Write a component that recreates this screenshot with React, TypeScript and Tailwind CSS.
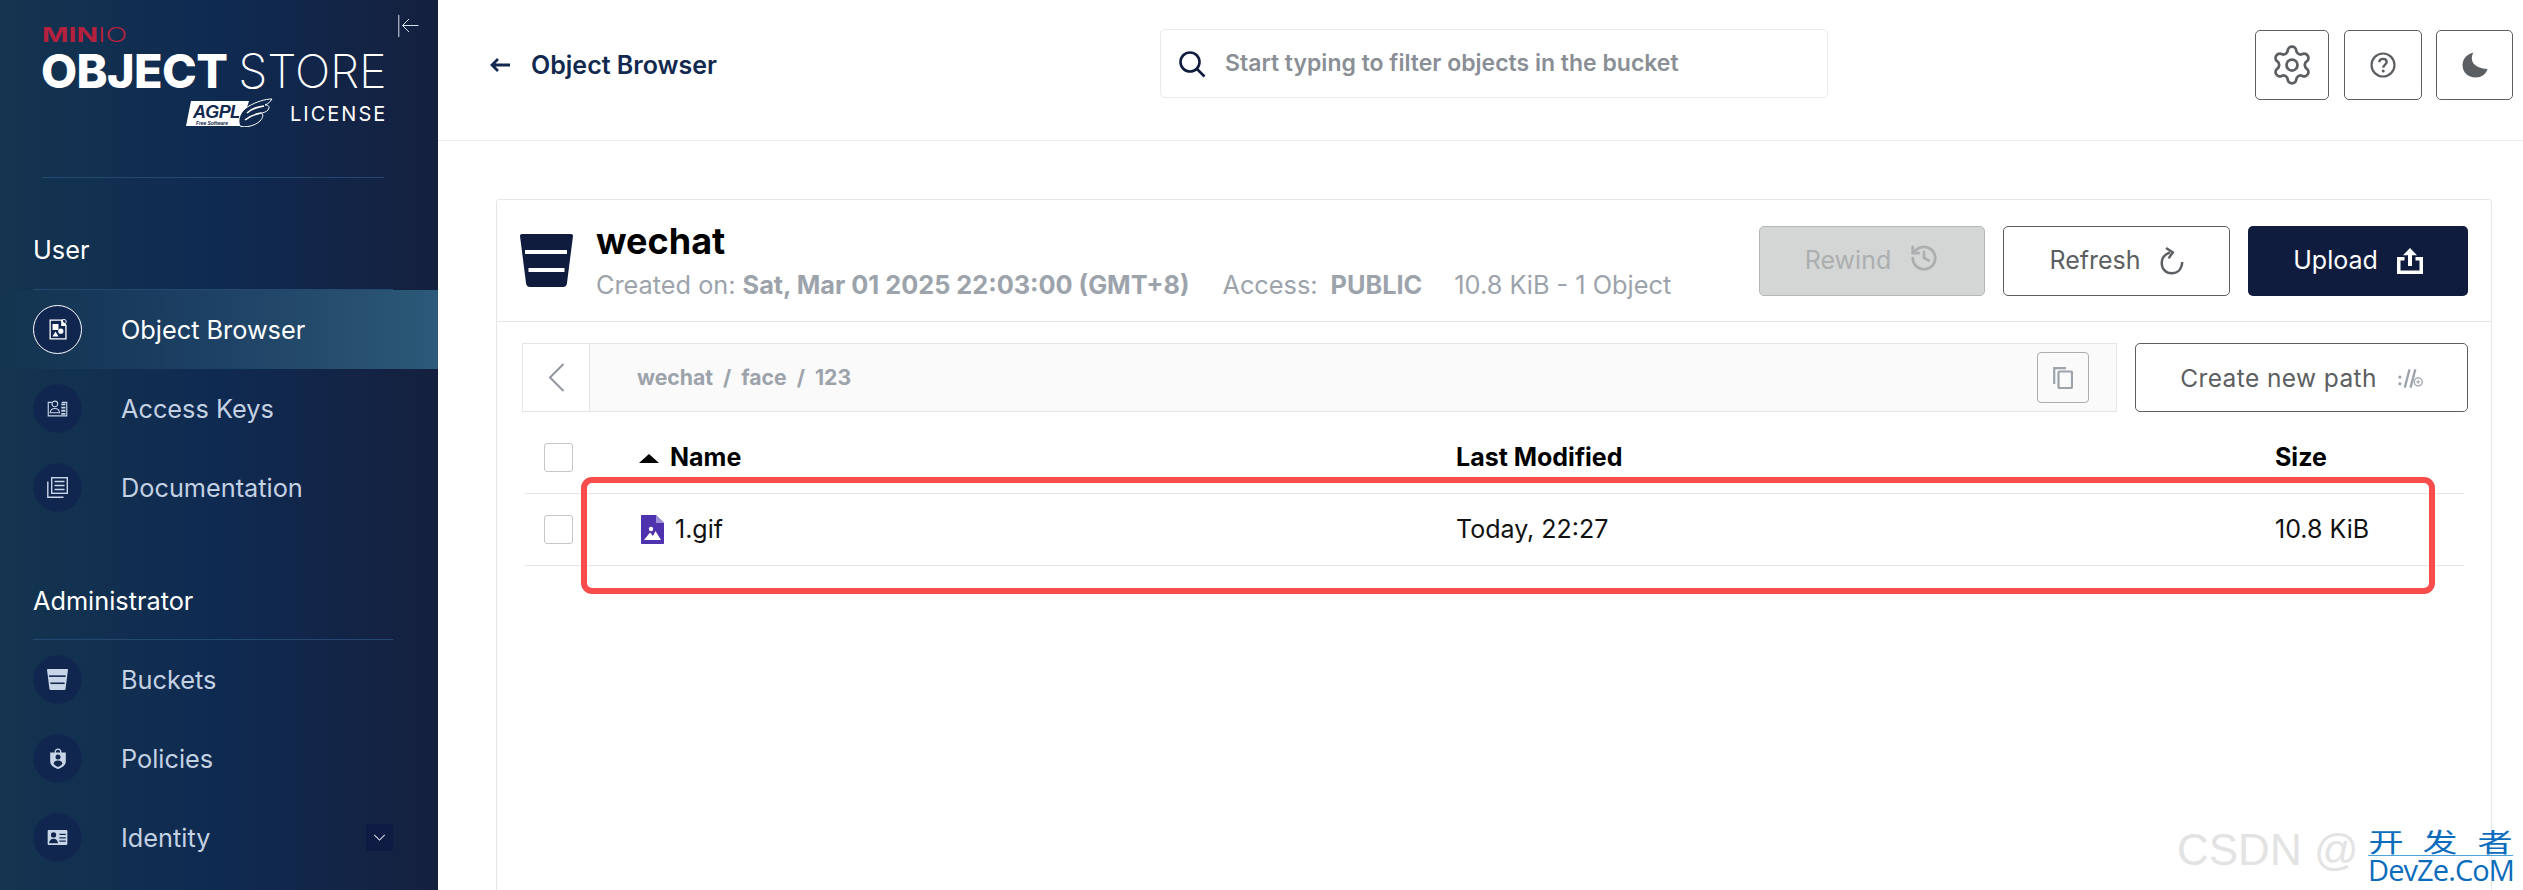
import { History, Settings } from "lucide-react";
import type { ReactNode } from "react";

const NAVY = "#0f1c3d";

function ObjectBrowserIcon() {
  return (
    <svg viewBox="0 0 20 21" className="w-[20px] h-[21px]" fill="#fff">
      <path fillRule="evenodd" d="M1.5 0.5H12.5L15 0.5V2.6L18.6 6V20.5H1.5ZM2.8 1.8V19.2H17.3V7H13.2V1.8Z" />
      <circle cx="16" cy="2.6" r="2.2" fill="none" stroke="#fff" strokeWidth="0.9" />
      <rect x="4.5" y="5" width="6" height="6" />
      <circle cx="12.8" cy="12.2" r="2.6" />
      <path d="M7.5 12.6L10.5 17.6H4.5Z" />
    </svg>
  );
}

function AccessKeysIcon() {
  return (
    <svg viewBox="0 0 22 18" className="w-[21px] h-[17px]" fill="none" stroke="#c8d5e6" strokeWidth="1.2">
      <path d="M5 2.5H1.2V16.8H20.8V2.5H15.5" />
      <circle cx="8.2" cy="4.2" r="3" />
      <path d="M3.2 13.5C3.5 10.5 5.5 9 8.2 9C11 9 12.9 10.5 13.2 13.5Z" />
      <path d="M15 4.6H19.4M15 8H19.4M15 11.4H19.4M15 14.6H19.4" strokeWidth="1.9" />
    </svg>
  );
}

function DocumentationIcon() {
  return (
    <svg viewBox="0 0 21 21" className="w-[21px] h-[21px]" fill="none" stroke="#c8d5e6" strokeWidth="1.4">
      <rect x="4.7" y="0.7" width="15.6" height="15.6" />
      <path d="M7.5 4.5H17.5M7.5 8.5H17.5M7.5 12.5H17.5" strokeWidth="1.6" />
      <path d="M0.8 4.5V20.2H16.5" />
    </svg>
  );
}

function BucketIcon({ color, gap }: { color: string; gap: string }) {
  return (
    <svg viewBox="0 0 53 53" className="w-full h-full">
      <path
        d="M2 0H51C52.3 0 53 .8 53 2L47 49C46.7 51.6 45.4 53 43 53H10C7.6 53 6.3 51.6 6 49L0 2C0 .8.7 0 2 0Z"
        fill={color}
      />
      <rect x="5" y="16" width="42" height="4" fill={gap} />
      <rect x="8.5" y="34" width="36" height="4" fill={gap} />
    </svg>
  );
}

function PoliciesIcon() {
  return (
    <svg viewBox="0 0 16 21" className="w-[16px] h-[21px]" fill="#c8d5e6">
      <path fillRule="evenodd" d="M4.5 4.5C4.5 2 6 .5 8 .5S11.5 2 11.5 4.5H15.8V13.5C15.8 17 12.5 19.5 8 21C3.5 19.5 .2 17 .2 13.5V4.5ZM5.8 4.5H10.2C10.2 2.8 9.3 1.8 8 1.8S5.8 2.8 5.8 4.5Z" />
      <circle cx="8" cy="9" r="2.5" fill="#12294f" />
      <path d="M3.6 16C3.8 13.6 5.6 12.6 8 12.6S12.2 13.6 12.4 16C11 17.6 9.5 18.4 8 18.9C6.5 18.4 5 17.6 3.6 16Z" fill="#12294f" />
    </svg>
  );
}

function IdentityIcon() {
  return (
    <svg viewBox="0 0 21 16" className="w-[21px] h-[15px]" fill="#c8d5e6">
      <path fillRule="evenodd" d="M1 0H20C20.6 0 21 .4 21 1V15C21 15.6 20.6 16 20 16H1C.4 16 0 15.6 0 15V1C0 .4.4 0 1 0ZM6.3 2.5A2.8 2.8 0 1 0 6.3 8.1A2.8 2.8 0 1 0 6.3 2.5ZM1.6 14H11C10.8 11 9 9.3 6.3 9.3S1.8 11 1.6 14ZM12.5 4V5.4H19.3V4ZM12.5 7.6V9H19.3V7.6ZM12.5 11.2V12.6H19.3V11.2Z" />
    </svg>
  );
}

function NavItem({ icon, label, active, chevron }: { icon: ReactNode; label: string; active?: boolean; chevron?: boolean }) {
  return (
    <div
      className={`flex items-center h-[79px] pl-[33px] ${
        active ? "bg-[linear-gradient(90deg,rgba(43,90,120,0)_0%,#2c5a7a_100%)] text-white" : "text-[#c3d1e3]"
      }`}
    >
      <div
        className={`flex items-center justify-center w-[49px] h-[49px] rounded-full bg-[#11264f] ${
          active ? "border border-white" : "border border-[#13294f]"
        }`}
      >
        {icon}
      </div>
      <span className="ml-[39px] pt-[1px] text-[25.3px] leading-none">{label}</span>
      {chevron && (
        <div className="ml-auto mr-[45px] flex items-center justify-center w-[27px] h-[27px] rounded-[3px] bg-[#0e1b42]">
          <svg viewBox="0 0 14 8" className="w-[13px] h-[7px]" fill="none" stroke="#d5deea" strokeWidth="1.2">
            <path d="M1 1L7 7L13 1" />
          </svg>
        </div>
      )}
    </div>
  );
}

function Logo() {
  return (
    <div className="h-[177px] pl-[42px] pt-[26px] text-white">
      <div className="h-[18px] flex items-center origin-left scale-x-[1.42] text-[#b3213f] text-[20px] leading-none">
        <span className="font-bold">MIN</span>
        <span className="font-light">IO</span>
      </div>
      <div className="mt-[9px] h-[36px] flex items-center text-[46.8px] leading-none whitespace-nowrap -ml-[1px]">
        <span className="font-extrabold tracking-[-0.6px]">OBJECT</span>
        <span className="ml-[11px] font-extralight tracking-[-0.2px]">STORE</span>
      </div>
      <div className="mt-[9px] flex items-center pl-[143px]">
        <svg viewBox="0 0 88 29" className="w-[88px] h-[29px]">
          <path d="M1 28L6 3H64L56 28Z" fill="#fff" />
          <text x="8" y="20" fontFamily="Liberation Sans, sans-serif" fontSize="18" fontStyle="italic" fontWeight="700" fill="#12294f" textLength="48">
            AGPL
          </text>
          <text x="11" y="26.5" fontFamily="Liberation Sans, sans-serif" fontSize="5" fontStyle="italic" fontWeight="700" fill="#12294f" textLength="32">
            Free Software
          </text>
          <path d="M55 28C52 22 55 13 64 8C71 4 80 1 87 1C85 4 83 6 80 7C84 7 85 9 83 12C81 14 78 15 76 15C79 16 78 20 75 23C70 28 60 30 55 28Z" fill="#12294f" stroke="#fff" strokeWidth="1" />
          <path d="M62 15C67 10 73 9 79 8M60 22C66 17 71 16 76 15" fill="none" stroke="#fff" strokeWidth="1.6" />
        </svg>
        <span className="ml-[17px] pt-[2px] text-[20px] leading-none tracking-[2px]">LICENSE</span>
      </div>
    </div>
  );
}

function Sidebar() {
  return (
    <aside className="relative shrink-0 w-[438px] h-full bg-[linear-gradient(90deg,#14344f_0%,#0f2a51_50%,#15203e_100%)]">
      <svg viewBox="0 0 21 22" className="absolute left-[398px] top-[15px] w-[21px] h-[22px]" fill="none" stroke="#d8e0ea" strokeWidth="1">
        <path d="M.8 0V22M20.5 10.5H5M11 4L4.5 10.5L11 17" />
      </svg>
      <Logo />
      <div className="ml-[42px] w-[342px] h-px bg-[#24496e]" />
      <div className="ml-[33px] mt-[56px] h-[32px] flex items-center text-white text-[25.3px] leading-none">User</div>
      <div className="ml-[33px] mt-[23px] w-[360px] h-px bg-[#24496e]" />
      <NavItem active icon={<ObjectBrowserIcon />} label="Object Browser" />
      <NavItem icon={<AccessKeysIcon />} label="Access Keys" />
      <NavItem icon={<DocumentationIcon />} label="Documentation" />
      <div className="ml-[33px] mt-[58px] h-[32px] flex items-center text-white text-[25.3px] leading-none">Administrator</div>
      <div className="ml-[33px] mt-[22px] w-[360px] h-px bg-[#24496e]" />
      <NavItem
        icon={
          <div className="w-[21px] h-[21px]">
            <BucketIcon color="#c8d5e6" gap="#12294f" />
          </div>
        }
        label="Buckets"
      />
      <NavItem icon={<PoliciesIcon />} label="Policies" />
      <NavItem chevron icon={<IdentityIcon />} label="Identity" />
    </aside>
  );
}

function TopIconButton({ width, children }: { width: string; children: ReactNode }) {
  return <button className={`flex items-center justify-center h-[70px] rounded-[5px] border border-[#5c5f62] ${width}`}>{children}</button>;
}

function Header() {
  return (
    <header className="shrink-0 flex items-center h-[141px] border-b border-[#eaeaea] pl-[52px] pr-[10px] pb-[10px]">
      <div className="flex items-center w-[670px]">
        <svg viewBox="0 0 20 14" className="w-[20px] h-[14px]" fill="none" stroke="#12294f" strokeWidth="2.8">
          <path d="M20 7H2M8 1L2 7L8 13" />
        </svg>
        <span className="ml-[21px] text-[25px] font-semibold text-[#12294f] leading-none">Object Browser</span>
      </div>
      <div className="flex items-center w-[668px] h-[69px] -mt-[3px] rounded-[5px] border border-[#eaeaea] pl-[17px]">
        <svg viewBox="0 0 28 28" className="w-[28px] h-[28px]" fill="none" stroke="#0f1c3d" strokeWidth="2.6">
          <circle cx="12" cy="12" r="9.5" />
          <path d="M19 19L26.5 26.5" />
        </svg>
        <span className="ml-[19px] text-[23px] font-semibold text-[#8a8f96] leading-none">Start typing to filter objects in the bucket</span>
      </div>
      <div className="ml-auto flex items-center">
        <TopIconButton width="w-[74px]">
          <Settings className="w-[44px] h-[44px] text-[#5c5f62]" strokeWidth={1.5} />
        </TopIconButton>
        <div className="w-[15px]" />
        <TopIconButton width="w-[78px]">
          <svg viewBox="0 0 24 24" className="w-[26px] h-[26px]" fill="none" stroke="#5c5f62" strokeWidth="2">
            <circle cx="12" cy="12" r="10.6" />
            <path d="M8.6 9.5C8.6 7.5 10 6.3 12 6.3C14 6.3 15.4 7.5 15.4 9.2C15.4 11.5 12.2 11.8 12.2 14.5" strokeWidth="2.2" />
            <circle cx="12.2" cy="17.6" r="1.4" fill="#5c5f62" stroke="none" />
          </svg>
        </TopIconButton>
        <div className="w-[14px]" />
        <TopIconButton width="w-[77px]">
          <svg viewBox="0 0 26 26" className="w-[26px] h-[26px]" fill="#5c5f62">
            <path d="M11.5 0.5C8 6 9 16 25.5 17C24 22 19.5 25.5 13.5 25.5C6 25.5 .5 20 .5 13.2C.5 7 5 2 11.5 0.5Z" />
          </svg>
        </TopIconButton>
      </div>
    </header>
  );
}

function BucketHeader() {
  return (
    <div className="shrink-0 flex items-center h-[123px] rounded-t-[3px] border border-[#e5e5e5] pl-[23px] pr-[23px]">
      <div className="w-[53px] h-[53px] -mt-[1px]">
        <BucketIcon color={NAVY} gap="#fff" />
      </div>
      <div className="ml-[23px] flex flex-col">
        <span className="text-[36px] font-bold text-black leading-[40px]">wechat</span>
        <div className="mt-[9px] flex items-center text-[25.3px] text-[#9ca3ab] leading-[30px] whitespace-nowrap">
          <span>Created on:</span>
          <span className="ml-[7px] font-bold">Sat, Mar 01 2025 22:03:00 (GMT+8)</span>
          <span className="ml-[33px]">Access:</span>
          <span className="ml-[13px] font-bold">PUBLIC</span>
          <span className="ml-[32px]">10.8 KiB - 1 Object</span>
        </div>
      </div>
      <div className="ml-auto flex items-center gap-[18px]">
        <button className="flex items-center justify-center w-[226px] h-[70px] rounded-[5px] border border-[#b5b7b8] bg-[#d4d6d6] text-[#acaeaf] text-[25px]">
          Rewind
          <History className="ml-[18px] -mt-[6px] w-[30px] h-[30px]" strokeWidth={2.2} />
        </button>
        <button className="flex items-center justify-center w-[227px] h-[70px] rounded-[5px] border border-[#5c5f62] text-[#5c5f62] text-[25px]">
          Refresh
          <svg viewBox="0 0 24 28" className="ml-[19px] w-[24px] h-[28px]" fill="none" stroke="#5c5f62" strokeWidth="2.4">
            <path d="M10 5.5C4.5 7.5 1.7 11 1.7 16C1.7 22 6 26.3 11.5 26.3C17 26.3 21.8 23 22.3 15" />
            <path d="M6 1L12.8 5.4L8.6 11.4" strokeWidth="2.4" />
          </svg>
        </button>
        <button className="flex items-center justify-center w-[220px] h-[70px] rounded-[5px] bg-[#0f1c3d] text-white text-[25px]">
          Upload
          <svg viewBox="0 0 26 26" className="ml-[19px] w-[26px] h-[26px]" fill="#fff">
            <path d="M13 0L20 7.2H15V18H11V7.2H6Z" />
            <path d="M0 9H7.5V12.5H3.5V22.5H22.5V12.5H18.5V9H26V26H0Z" />
          </svg>
        </button>
      </div>
    </div>
  );
}

function PathBar() {
  return (
    <div className="flex items-start gap-[18px]">
      <div className="flex items-center flex-1 h-[69px] border border-[#e5e5e5] bg-[#fafafa]">
        <div className="flex items-center justify-center w-[67px] h-full border-r border-[#e5e5e5] bg-white">
          <svg viewBox="0 0 17 29" className="w-[17px] h-[29px]" fill="none" stroke="#8f959c" strokeWidth="2">
            <path d="M15.5 1L2 14.5L15.5 28" />
          </svg>
        </div>
        <div className="ml-[47px] flex items-center gap-[10px] text-[21.2px] font-bold text-[#9ca3ab] leading-none">
          <span>wechat</span>
          <span>/</span>
          <span>face</span>
          <span>/</span>
          <span>123</span>
        </div>
        <button className="ml-auto mr-[27px] flex items-center justify-center w-[52px] h-[51px] rounded-[4px] border border-[#a9aeb3]">
          <svg viewBox="0 0 20 22" className="w-[20px] h-[22px]" fill="none" stroke="#9ca3ab" strokeWidth="2.2">
            <rect x="5.5" y="4.5" width="13.5" height="16.5" rx="1" />
            <path d="M1.2 17V1.2H13" />
          </svg>
        </button>
      </div>
      <button className="flex items-center justify-center pt-[1px] w-[333px] h-[69px] rounded-[5px] border border-[#5c5f62] text-[#5c5f62] text-[24.5px] tracking-[0.4px]">
        Create new path
        <svg viewBox="0 0 26 19" className="ml-[21px] w-[25px] h-[19px]" fill="none" stroke="#9ca3ab">
          <circle cx="2" cy="8" r="1.7" fill="#9ca3ab" stroke="none" />
          <circle cx="2" cy="15" r="1.7" fill="#9ca3ab" stroke="none" />
          <path d="M12 0L7 19M18 0L13 19" strokeWidth="2.4" />
          <circle cx="21" cy="13" r="4.2" fill="#fff" strokeWidth="1.3" />
          <path d="M21 10.8V15.2M18.8 13H23.2" strokeWidth="1" />
        </svg>
      </button>
    </div>
  );
}

function Checkbox() {
  return <div className="w-[29px] h-[29px] rounded-[3px] border border-[#c4c7ca] bg-white" />;
}

function FileTable() {
  const cols = "grid grid-cols-[114px_817px_819px_1fr] items-center";
  return (
    <div className="ml-[3px] mr-[4px]">
      <div className={`${cols} h-[82px] pt-[10px] border-b border-[#e5e5e5] text-[25px] font-bold text-black`}>
        <div className="pl-[19px]">
          <Checkbox />
        </div>
        <div className="flex items-center">
          <svg viewBox="0 0 20 9" className="w-[20px] h-[9px] mt-[2px]" fill="#000">
            <path d="M10 0L20 9H0Z" />
          </svg>
          <span className="ml-[11px]">Name</span>
        </div>
        <span>Last Modified</span>
        <span>Size</span>
      </div>
      <div className={`${cols} h-[72px] border-b border-[#e5e5e5] text-[25px] text-[#111]`}>
        <div className="pl-[19px]">
          <Checkbox />
        </div>
        <div className="flex items-center">
          <svg viewBox="0 0 23 29" className="ml-[2px] w-[23px] h-[29px]">
            <path d="M1 0H15L23 8V28C23 28.6 22.6 29 22 29H1C.4 29 0 28.6 0 28V1C0 .4.4 0 1 0Z" fill="#4f32ad" />
            <path d="M15 0L23 8H15Z" fill="#9e8fd6" />
            <circle cx="10" cy="14" r="2.2" fill="#fff" />
            <path d="M3 25L9 17.5L12 21L14.5 16L20 25Z" fill="#fff" />
          </svg>
          <span className="ml-[11px]">1.gif</span>
        </div>
        <span>Today, 22:27</span>
        <span>10.8 KiB</span>
      </div>
    </div>
  );
}

export default function App() {
  return (
    <div className="relative flex w-[2523px] h-[890px] overflow-hidden bg-white [font-family:Inter,sans-serif]">
      <Sidebar />
      <main className="flex-1 min-w-0 flex flex-col">
        <Header />
        <div className="flex-1 flex flex-col pl-[58px] pr-[31px] pt-[58px]">
          <BucketHeader />
          <div className="h-[700px] shrink-0 border border-t-0 border-[#e5e5e5] pl-[25px] pr-[23px] pt-[21px]">
            <PathBar />
            <FileTable />
          </div>
        </div>
      </main>
      {/* annotation + watermark sit on top of the page */}
      <div className="absolute left-[581px] top-[477px] w-[1854px] h-[117px] rounded-[11px] border-[6px] border-[#f94c4c]" />
      <div className="absolute left-[2177px] top-[826px] text-[44px] leading-[48px] text-[#e3e3e3] [font-family:'Liberation_Sans',sans-serif] whitespace-nowrap">
        CSDN @
      </div>
      <div className="absolute left-[2368px] top-[827px] w-[145px] text-[#0b6cbc] [font-family:'Noto_Sans_CJK_SC',sans-serif]">
        <div className="flex justify-between pl-[5px] pr-[5px] h-[28px] text-[26px] leading-[28px]">
          <span className="scale-x-[1.35]">开</span>
          <span className="scale-x-[1.35]">发</span>
          <span className="scale-x-[1.35]">者</span>
        </div>
        <div className="h-px bg-[#4ea3dd]" />
        <div className="text-[29px] leading-[25px] tracking-[-0.9px] mt-[1px] [font-family:'Open_Sans',sans-serif] whitespace-nowrap">DevZe.CoM</div>
      </div>
    </div>
  );
}
